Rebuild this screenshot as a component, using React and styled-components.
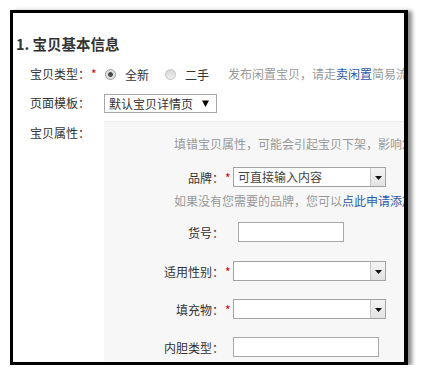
import React from "react";
import styled, { createGlobalStyle } from "styled-components";

const GlobalStyle = createGlobalStyle`
  html, body { margin: 0; padding: 0; background: #fff; }
  body {
    font-family: "Noto Sans CJK SC", "Liberation Sans", sans-serif;
    font-size: 12px;
    color: #333;
  }
`;

const Page = styled.div`
  padding: 10px 0 0 10px;
`;

const Frame = styled.div`
  box-sizing: border-box;
  width: 398px;
  height: 355px;
  border: 3px solid #000;
  border-right-width: 4px;
  box-shadow: 4px 1px 4px rgba(0, 0, 0, 0.45);
  background: #fff;
  overflow: hidden;
  display: flex;
  flex-direction: column;
  padding-top: 21px;
`;

const Heading = styled.h2`
  margin: 0;
  padding-left: 3px;
  font-size: 14.5px;
  line-height: 20px;
  font-weight: bold;
  color: #333;
  white-space: nowrap;
`;

const Row = styled.div`
  display: flex;
  align-items: ${(p) => (p.$top ? "stretch" : "center")};
  height: ${(p) => (p.$grow ? "auto" : "20px")};
  flex: ${(p) => (p.$grow ? 1 : "none")};
  margin-top: ${(p) => p.$mt}px;
  padding-left: 17px;
  white-space: nowrap;
`;

const Label = styled.div`
  width: 74px;
  flex: none;
  line-height: 16px;
  padding-top: ${(p) => p.$pt || 0}px;
  color: #333;
`;

const Star = styled.span`
  color: #d40000;
  margin-left: 1px;
`;

const Radio = styled.span`
  display: inline-block;
  box-sizing: border-box;
  width: 11px;
  height: 11px;
  border-radius: 50%;
  border: 1px solid ${(p) => (p.$checked ? "#9c9c9c" : "#c4c4c4")};
  background: ${(p) =>
    p.$checked
      ? "radial-gradient(circle, #4a4a4a 0 2px, #dcdcdc 2.8px, #f2f2f2 100%)"
      : "linear-gradient(#d6d6d6, #f0f0f0)"};
  margin-left: ${(p) => p.$ml}px;
  flex: none;
`;

const OptionText = styled.span`
  margin-left: 9px;
  color: #333;
`;

const Hint = styled.span`
  margin-left: ${(p) => p.$ml || 0}px;
  color: #999;
  line-height: 16px;
`;

const Link = styled.a`
  color: #2b5aa8;
  text-decoration: none;
`;

const SelectBox = styled.div`
  box-sizing: border-box;
  width: 113px;
  height: 19px;
  border: 1px solid #a6a6a6;
  background: #fff;
  display: flex;
  align-items: center;
  justify-content: space-between;
  padding: 0 7px 0 4px;
  color: #333;
  line-height: 17px;
`;

const Panel = styled.div`
  flex: 1;
  min-width: 0;
  background: #f7f7f7;
  border-top: 1px solid #ebebeb;
  padding-top: 14px;
  display: flex;
  flex-direction: column;
  overflow: hidden;
`;

const PanelText = styled.div`
  padding-left: 70px;
  line-height: 16px;
  margin-top: ${(p) => p.$mt || 0}px;
  color: #999;
  white-space: nowrap;
`;

const FieldRow = styled.div`
  display: flex;
  align-items: center;
  height: 20px;
  margin-top: ${(p) => p.$mt}px;
`;

const FieldLabel = styled.div`
  width: 120px;
  flex: none;
  text-align: right;
  color: #333;
`;

const StarCell = styled.span`
  width: ${(p) => p.$w}px;
  flex: none;
  color: #d40000;
  padding-left: 1px;
  box-sizing: border-box;
`;

const Combo = styled.div`
  box-sizing: border-box;
  width: 153px;
  height: 20px;
  border: 1px solid #a3a3a3;
  background: #fff;
  display: flex;
  flex: none;
`;

const ComboText = styled.span`
  flex: 1;
  padding-left: 4px;
  line-height: 18px;
  color: #444;
`;

const ComboButton = styled.span`
  width: 15px;
  border-left: 1px solid #c8c8c8;
  background: linear-gradient(#f4f4f4, #e2e2e2);
  display: flex;
  align-items: center;
  justify-content: center;
  padding-top: 2px;
  box-sizing: border-box;
`;

const TextInput = styled.div`
  box-sizing: border-box;
  width: ${(p) => p.$w}px;
  height: 20px;
  border: 1px solid #a9a9a9;
  background: #fff;
  flex: none;
`;

const Triangle = () => (
  <svg width="7" height="4" viewBox="0 0 7 4">
    <path d="M0 0 H7 L3.5 4 Z" fill="#111" />
  </svg>
);

const SelectCaret = () => (
  <svg width="7" height="7" viewBox="0 0 7 7">
    <path d="M0 0.5 H7 L3.5 7 Z" fill="#000" />
  </svg>
);

const ComboField = ({ text }) => (
  <Combo>
    <ComboText>{text}</ComboText>
    <ComboButton>
      <Triangle />
    </ComboButton>
  </Combo>
);

export default function App() {
  return (
    <>
      <GlobalStyle />
      <Page>
        <Frame>
          <Heading>1. 宝贝基本信息</Heading>
          <Row $mt={10}>
            <Label>
              宝贝类型：<Star>*</Star>
            </Label>
            <Radio $checked $ml={1} />
            <OptionText>全新</OptionText>
            <Radio $ml={16} />
            <OptionText>二手</OptionText>
            <Hint $ml={19}>
              发布闲置宝贝，请走<Link>卖闲置</Link>简易流程发布
            </Hint>
          </Row>
          <Row $mt={9}>
            <Label>页面模板：</Label>
            <SelectBox>
              默认宝贝详情页
              <SelectCaret />
            </SelectBox>
          </Row>
          <Row $mt={8} $grow $top>
            <Label $pt={4}>宝贝属性：</Label>
            <Panel>
              <PanelText>填错宝贝属性，可能会引起宝贝下架，影响您的正常销售。请认真准确填写！</PanelText>
              <FieldRow $mt={15}>
                <FieldLabel>品牌：</FieldLabel>
                <StarCell $w={9}>*</StarCell>
                <ComboField text="可直接输入内容" />
              </FieldRow>
              <PanelText $mt={6}>
                如果没有您需要的品牌，您可以<Link>点此申请添加品牌</Link>
              </PanelText>
              <FieldRow $mt={13}>
                <FieldLabel>货号：</FieldLabel>
                <StarCell $w={14} />
                <TextInput $w={106} />
              </FieldRow>
              <FieldRow $mt={19}>
                <FieldLabel>适用性别：</FieldLabel>
                <StarCell $w={9}>*</StarCell>
                <ComboField text="" />
              </FieldRow>
              <FieldRow $mt={18}>
                <FieldLabel>填充物：</FieldLabel>
                <StarCell $w={9}>*</StarCell>
                <ComboField text="" />
              </FieldRow>
              <FieldRow $mt={18}>
                <FieldLabel>内胆类型：</FieldLabel>
                <StarCell $w={9} />
                <TextInput $w={146} />
              </FieldRow>
            </Panel>
          </Row>
        </Frame>
      </Page>
    </>
  );
}
